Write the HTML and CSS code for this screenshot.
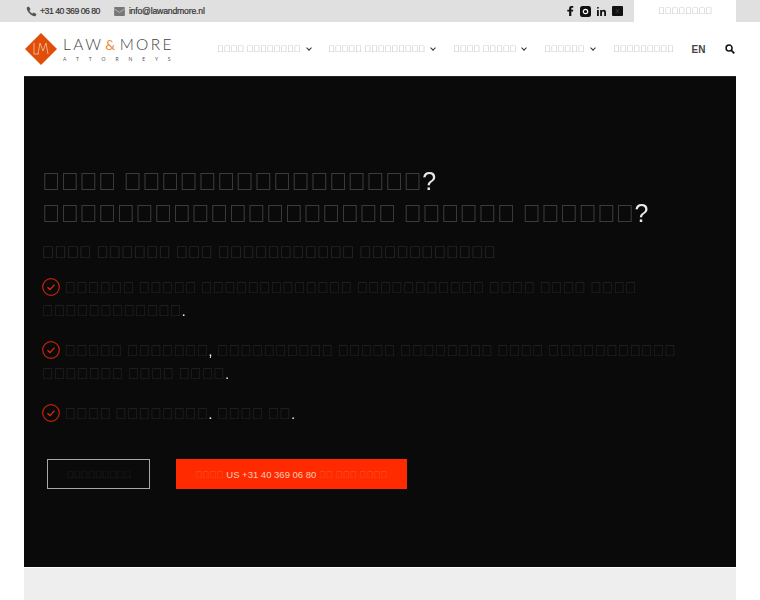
FILE: index.html
```html
<!DOCTYPE html>
<html lang="nl">
<head>
<meta charset="utf-8">
<title>Law &amp; More</title>
<link rel="stylesheet" href="styles.css">
</head>
<body>
<div class="topbar">
  <div class="contact">
    <svg class="ic" width="11" height="11" viewBox="0 0 24 24"><path fill="#555" d="M6 1l4 6-2.500 3c1 3 3.500 5.500 6.500 6.500l3-2.500 6 4-2.500 4.500C12 23 1 12 1.500 3.500z"/></svg>
    <span class="tel">+31 40 369 06 80</span>
    <svg class="ic mail" width="11" height="9" viewBox="0 0 12 10"><rect width="12" height="10" rx="1" fill="#777"/><path d="M0 2l6 4 6-4" fill="none" stroke="#ccc" stroke-width=".8"/></svg>
    <span class="addr">info@lawandmore.nl</span>
  </div>
  <div class="social">
    <svg width="7" height="10" viewBox="0 0 7 11"><path fill="#111" d="M2 11V6H0V4h2V2.500C2 .8 3 0 4.500 0H6.500v2H5.300C4.600 2 4.400 2.300 4.400 3v1h2.100L6.200 6H4.400v5z"/></svg>
    <svg width="11" height="11" viewBox="0 0 11 11"><rect width="11" height="11" rx="2.500" fill="#111"/><circle cx="5.500" cy="5.500" r="2.200" fill="none" stroke="#fff" stroke-width="1.200"/></svg>
    <svg width="9" height="9" viewBox="0 0 10 10"><path fill="#111" d="M0 3.300h2V10H0zM0 .9a1 1 0 1 1 2 0 1 1 0 0 1-2 0zM3.500 3.300h1.900v.9c.4-.6 1.100-1.100 2.100-1.100C9.300 3.100 10 4.200 10 6v4H8V6.400c0-.9-.3-1.500-1.100-1.500-.9 0-1.400.6-1.400 1.600V10h-2z"/></svg>
    <svg width="11" height="10" viewBox="0 0 11 10"><rect width="11" height="10" rx="1" fill="#111"/><path d="M4 3l3 4M7 3L4 7" stroke="#444" stroke-width=".7"/></svg>
  </div>
  <div class="login"><span class="t-nav">&#xE000;&#xE000;&#xE000;&#xE000;&#xE000;&#xE000;&#xE000;&#xE000;</span></div>
</div>
<header class="header">
  <div class="logo">
    <svg width="32" height="32" viewBox="0 0 32 32"><path fill="#e04e0a" d="M16 0l16 16-16 16L0 16z"/><path fill="none" stroke="#f6c7a6" stroke-width=".8" d="M9 10v11h5M13 21l2-11 3 8 3-8 2 11"/></svg>
    <div class="wordmark">
      <div class="lm">LAW <span class="amp">&amp;</span> MORE</div>
      <div class="att">ATTORNEYS</div>
    </div>
  </div>
  <nav class="nav">
    <span class="item t-nav">&#xE000;&#xE000;&#xE000;&#xE000; &#xE000;&#xE000;&#xE000;&#xE000;&#xE000;&#xE000;&#xE000;&#xE000;<i class="chev"></i></span>
    <span class="item t-nav">&#xE000;&#xE000;&#xE000;&#xE000;&#xE000; &#xE000;&#xE000;&#xE000;&#xE000;&#xE000;&#xE000;&#xE000;&#xE000;&#xE000;<i class="chev"></i></span>
    <span class="item t-nav">&#xE000;&#xE000;&#xE000;&#xE000; &#xE000;&#xE000;&#xE000;&#xE000;&#xE000;<i class="chev"></i></span>
    <span class="item t-nav">&#xE000;&#xE000;&#xE000;&#xE000;&#xE000;&#xE000;<i class="chev"></i></span>
    <span class="item t-nav">&#xE000;&#xE000;&#xE000;&#xE000;&#xE000;&#xE000;&#xE000;&#xE000;&#xE000;</span>
    <span class="item en">EN</span>
    <svg class="search" width="10" height="10" viewBox="0 0 11 11"><circle cx="4.500" cy="4.500" r="3.300" fill="none" stroke="#111" stroke-width="1.700"/><path d="M7 7l3.200 3.200" stroke="#111" stroke-width="2"/></svg>
  </nav>
</header>
<main class="hero">
  <h1 class="title"><span class="t-h">&#xE000;&#xE000;&#xE000;&#xE000; &#xE000;&#xE000;&#xE000;&#xE000;&#xE000;&#xE000;&#xE000;&#xE000;&#xE000;&#xE000;&#xE000;&#xE000;&#xE000;&#xE000;&#xE000;&#xE000;</span>?<br><span class="t-h">&#xE000;&#xE000;&#xE000;&#xE000;&#xE000;&#xE000;&#xE000;&#xE000;&#xE000;&#xE000;&#xE000;&#xE000;&#xE000;&#xE000;&#xE000;&#xE000;&#xE000;&#xE000;&#xE000; &#xE000;&#xE000;&#xE000;&#xE000;&#xE000;&#xE000; &#xE000;&#xE000;&#xE000;&#xE000;&#xE000;&#xE000;</span>?</h1>
  <h2 class="sub"><span class="t-s">&#xE000;&#xE000;&#xE000;&#xE000; &#xE000;&#xE000;&#xE000;&#xE000;&#xE000;&#xE000; &#xE000;&#xE000;&#xE000; &#xE000;&#xE000;&#xE000;&#xE000;&#xE000;&#xE000;&#xE000;&#xE000;&#xE000;&#xE000;&#xE000; &#xE000;&#xE000;&#xE000;&#xE000;&#xE000;&#xE000;&#xE000;&#xE000;&#xE000;&#xE000;&#xE000;</span></h2>
  <ul class="list">
    <li><svg class="check" width="18" height="18" viewBox="0 0 18 18"><circle cx="9" cy="9" r="8.300" fill="none" stroke="#c5230a" stroke-width="1.200"/><path d="M5.500 9.300l2.500 2.300 4.500-5" fill="none" stroke="#d8300c" stroke-width="1.300"/></svg><span class="t-b">&#xE000;&#xE000;&#xE000;&#xE000;&#xE000;&#xE000; &#xE000;&#xE000;&#xE000;&#xE000;&#xE000; &#xE000;&#xE000;&#xE000;&#xE000;&#xE000;&#xE000;&#xE000;&#xE000;&#xE000;&#xE000;&#xE000;&#xE000;&#xE000; &#xE000;&#xE000;&#xE000;&#xE000;&#xE000;&#xE000;&#xE000;&#xE000;&#xE000;&#xE000;&#xE000; &#xE000;&#xE000;&#xE000;&#xE000; &#xE000;&#xE000;&#xE000;&#xE000; &#xE000;&#xE000;&#xE000;&#xE000; &#xE000;&#xE000;&#xE000;&#xE000;&#xE000;&#xE000;&#xE000;&#xE000;&#xE000;&#xE000;&#xE000;&#xE000;</span>.</li>
    <li><svg class="check" width="18" height="18" viewBox="0 0 18 18"><circle cx="9" cy="9" r="8.300" fill="none" stroke="#c5230a" stroke-width="1.200"/><path d="M5.500 9.300l2.500 2.300 4.500-5" fill="none" stroke="#d8300c" stroke-width="1.300"/></svg><span class="t-b">&#xE000;&#xE000;&#xE000;&#xE000;&#xE000; &#xE000;&#xE000;&#xE000;&#xE000;&#xE000;&#xE000;&#xE000;</span>, <span class="t-b">&#xE000;&#xE000;&#xE000;&#xE000;&#xE000;&#xE000;&#xE000;&#xE000;&#xE000;&#xE000; &#xE000;&#xE000;&#xE000;&#xE000;&#xE000; &#xE000;&#xE000;&#xE000;&#xE000;&#xE000;&#xE000;&#xE000;&#xE000; &#xE000;&#xE000;&#xE000;&#xE000; &#xE000;&#xE000;&#xE000;&#xE000;&#xE000;&#xE000;&#xE000;&#xE000;&#xE000;&#xE000;&#xE000; &#xE000;&#xE000;&#xE000;&#xE000;&#xE000;&#xE000;&#xE000; &#xE000;&#xE000;&#xE000;&#xE000; &#xE000;&#xE000;&#xE000;&#xE000;</span>.</li>
    <li><svg class="check" width="18" height="18" viewBox="0 0 18 18"><circle cx="9" cy="9" r="8.300" fill="none" stroke="#c5230a" stroke-width="1.200"/><path d="M5.500 9.300l2.500 2.300 4.500-5" fill="none" stroke="#d8300c" stroke-width="1.300"/></svg><span class="t-b">&#xE000;&#xE000;&#xE000;&#xE000; &#xE000;&#xE000;&#xE000;&#xE000;&#xE000;&#xE000;&#xE000;&#xE000;</span>. <span class="t-b">&#xE000;&#xE000;&#xE000;&#xE000; &#xE000;&#xE000;</span>.</li>
  </ul>
  <div class="actions">
    <a class="btn outline"><span class="t-o">&#xE000;&#xE000;&#xE000;&#xE000;&#xE000;&#xE000;&#xE000;&#xE000;&#xE000;</span></a>
    <a class="btn primary"><span class="t-r">&#xE000;&#xE000;&#xE000;&#xE000;</span> US +31 40 369 06 80 <span class="t-r">&#xE000;&#xE000; &#xE000;&#xE000;&#xE000; &#xE000;&#xE000;&#xE000;&#xE000;</span></a>
  </div>
</main>
<section class="next"></section>
</body>
</html>
```
FILE: styles.css
```css
* { box-sizing: border-box; }
html, body { margin: 0; padding: 0; }
body { background: #fff; font-family: "Liberation Sans", Arial, sans-serif; overflow: hidden; height: 600px; }
.topbar { height: 22px; background: #e0e0e0; display: flex; align-items: center; padding-left: 26px; padding-right: 24px; }
.contact { display: flex; align-items: center; flex: 1; font-size: 8.700px; color: #333; -webkit-text-stroke: .2px #333; }
.tel { letter-spacing: -.5px; }
.addr { letter-spacing: -.2px; }
.ic { margin-right: 3px; }
.mail { margin-left: 14px; margin-right: 4px; }
.social { display: flex; align-items: center; gap: 6px; margin-right: 11px; }
.login { width: 102px; height: 22px; background: #fff; display: flex; align-items: center; justify-content: center; }
.t-nav { font-size: 9px; color: #a8a8a8; white-space: nowrap; will-change: transform; }
.header { height: 54px; display: flex; align-items: center; padding: 0 25px 0 25px; justify-content: space-between; background: #fff; }
.logo { display: flex; align-items: center; gap: 6px; white-space: nowrap; }
.wordmark { color: #444; font-family: Lato, sans-serif; }
.lm { font-size: 15.500px; font-weight: 300; letter-spacing: 2.400px; word-spacing: -4.500px; line-height: 18px; margin-bottom: 1px; }
.amp { color: #f08a3a; font-size: 14px; font-weight: 400; }
.att { font-size: 5px; letter-spacing: 9.900px; line-height: 9px; color: #555; }
.nav { display: flex; align-items: center; gap: 18px; }
.item { display: flex; align-items: center; }
.chev { width: 4px; height: 4px; border-right: 1.500px solid #333; border-bottom: 1.500px solid #333; transform: rotate(45deg); margin-left: 6px; margin-top: -2px; }
.en { font-size: 10px; font-weight: 700; color: #444; }
.search { margin-left: 1.500px; }
.hero { margin: 0 24px; height: 491px; background: #0a0a0a; border-top: 1px solid #222; padding: 88px 18px 0; color: #e8e8e8; }
.title { margin: 0; font-size: 24.900px; font-weight: 400; line-height: 32px; will-change: transform; }
.t-h { color: #fff; opacity: .2; }
.sub { margin: 11px 0 0; font-size: 16.600px; font-weight: 400; line-height: 26px; will-change: transform; }
.t-s { color: #fff; opacity: .14; }
.list { list-style: none; margin: 10px 0 0; padding: 0; font-size: 15.500px; line-height: 23px; will-change: transform; }
.list li { margin-bottom: 17px; }
.t-b { color: #fff; opacity: .1; }
.check { vertical-align: -3px; margin-right: 4.500px; }
.actions { display: flex; gap: 26px; margin: 34px 0 0 5px; }
.btn { height: 30px; display: flex; align-items: center; justify-content: center; font-size: 9.500px; white-space: pre; }
.outline { width: 103px; border: 1.500px solid #a8a8a8; }
.t-o { color: #fff; opacity: .1; }
.primary { width: 231px; background: #ff2a00; color: #ffc9b5; }
.t-r { color: #ff5a30; font-size: 9.400px; }
.next { margin: 1px 24px 0; height: 40px; background: #eee; }
```
